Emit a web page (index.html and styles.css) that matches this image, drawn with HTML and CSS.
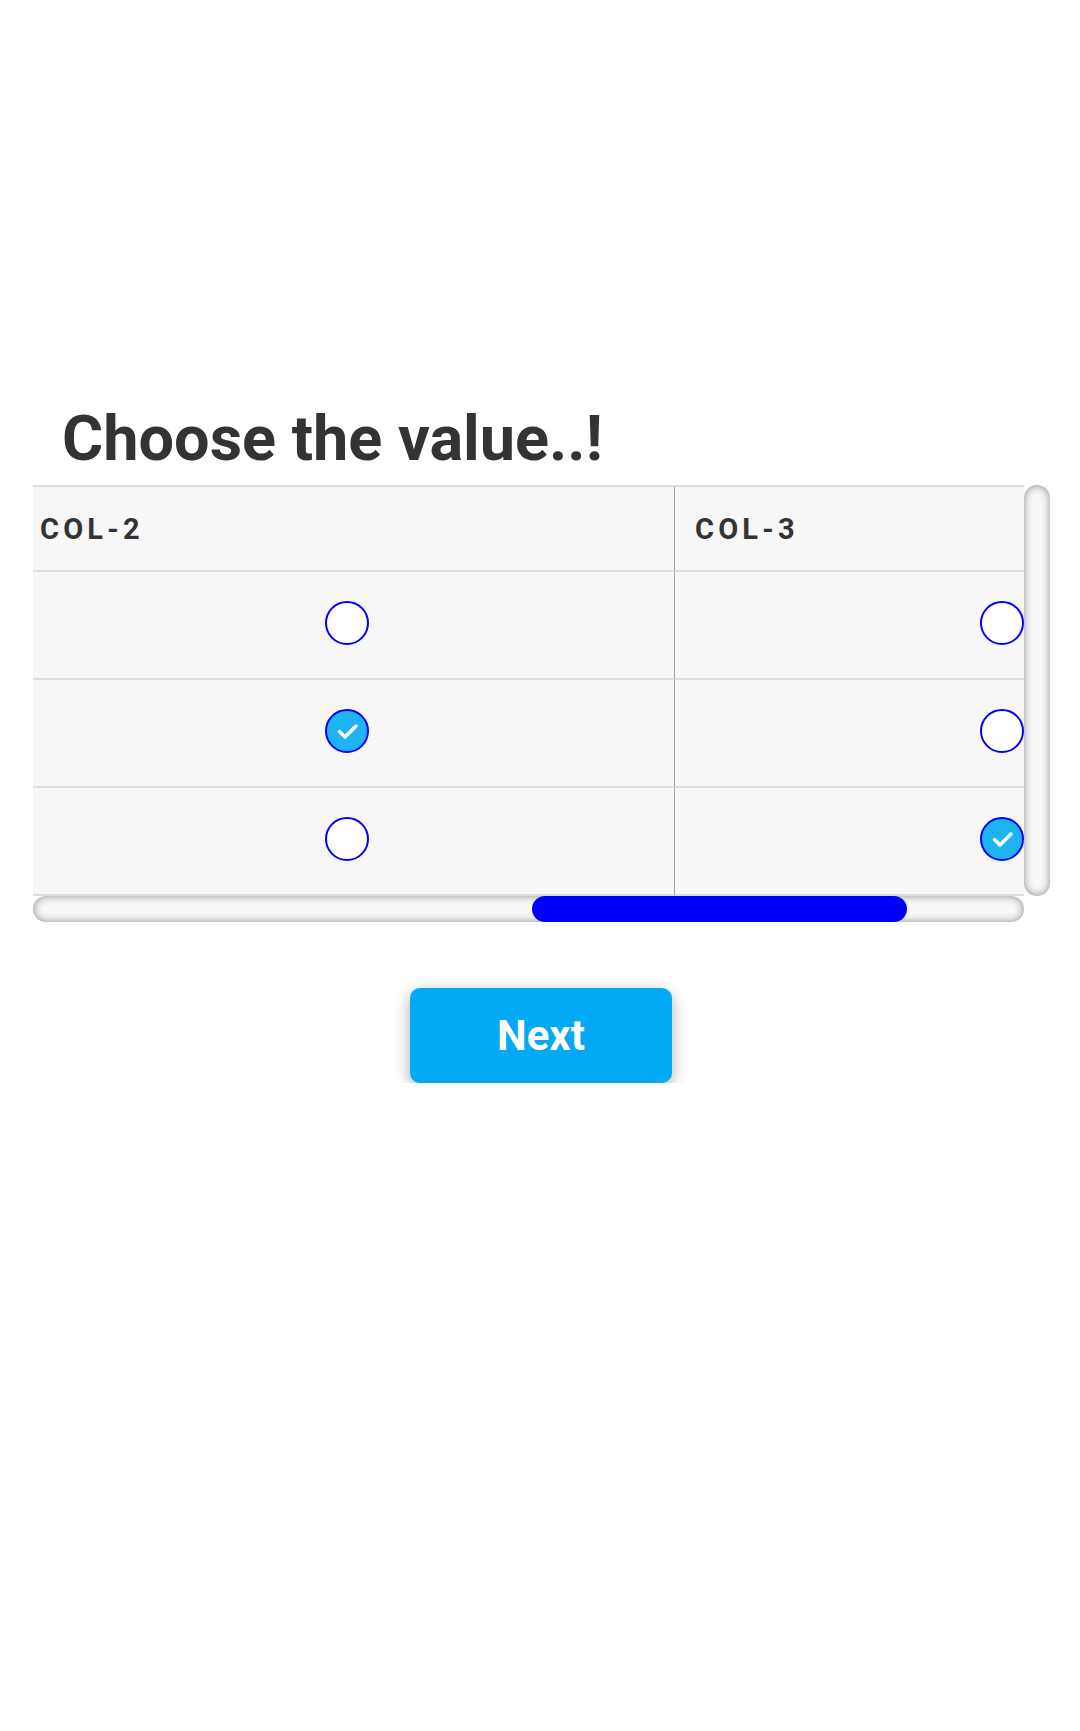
FILE: index.html
```html
<!DOCTYPE html>
<html lang="en">
<head>
<meta charset="utf-8">
<title>Choose the value</title>
<link rel="stylesheet" href="styles.css">
</head>
<body>
<main class="page">
  <h1 class="title">Choose the value..!</h1>
  <div class="matrix">
    <div class="viewport">
      <div class="grid">
        <div class="cell head"></div>
        <div class="cell head"></div>
        <div class="cell head">COL-2</div>
        <div class="cell head">COL-3</div>

        <div class="cell body"><span class="radio"></span></div>
        <div class="cell body"><span class="radio"></span></div>
        <div class="cell body"><span class="radio"></span></div>
        <div class="cell body"><span class="radio"></span></div>

        <div class="cell body"><span class="radio"></span></div>
        <div class="cell body"><span class="radio"></span></div>
        <div class="cell body"><span class="radio checked"><svg viewBox="0 0 44 44" width="44" height="44"><path d="M14.5 22.5 L20 28 L31 17" /></svg></span></div>
        <div class="cell body"><span class="radio"></span></div>

        <div class="cell body"><span class="radio"></span></div>
        <div class="cell body"><span class="radio"></span></div>
        <div class="cell body"><span class="radio"></span></div>
        <div class="cell body"><span class="radio checked"><svg viewBox="0 0 44 44" width="44" height="44"><path d="M14.5 22.5 L20 28 L31 17" /></svg></span></div>
      </div>
    </div>
    <div class="vbar"></div>
    <div class="hbar"><div class="hthumb"></div></div>
    <div class="corner"></div>
  </div>
  <div class="actions">
    <button class="next" type="button">Next</button>
  </div>
</main>
</body>
</html>
```

FILE: styles.css
```css
html, body {
  margin: 0;
  padding: 0;
  background: #ffffff;
}

body {
  font-family: Roboto, "Noto Sans", "Liberation Sans", sans-serif;
  color: #333333;
}

.page {
  padding-top: 407px;
}

.title {
  margin: 0 0 14px 0;
  padding-left: 62px;
  font-size: 63px;
  line-height: 64px;
  font-weight: 700;
  color: #333333;
}

.matrix {
  margin-left: 33px;
  width: 1017px;
  display: grid;
  grid-template-columns: 991px 26px;
  grid-template-rows: 411px 26px;
}

.viewport {
  overflow: hidden;
}

.vbar,
.hbar {
  box-sizing: border-box;
  border-radius: 13px;
  background: #f8f8f8;
  box-shadow: inset 0 0 8px #8c8c8c;
}

.hbar {
  display: flex;
}

.hthumb {
  margin-left: 499px;
  width: 375px;
  height: 26px;
  border-radius: 13px;
  background: #0000ff;
}

.grid {
  display: grid;
  grid-template-columns: repeat(4, 655px);
  width: 2620px;
  margin-left: -1323px;
  border-top: 2px solid #dddddd;
  background: #f7f7f7;
}

.cell {
  box-sizing: border-box;
  border-bottom: 2px solid #dddddd;
  border-right: 1px solid #9e9e9e;
  display: flex;
  align-items: center;
}

.head {
  height: 85px;
  padding-left: 20px;
  font-size: 29px;
  font-weight: 700;
  letter-spacing: 4.2px;
  color: #333333;
}

.body {
  height: 108px;
  justify-content: center;
  padding-bottom: 4px;
}

.radio {
  box-sizing: border-box;
  width: 44px;
  height: 44px;
  border: 2px solid #0000ff;
  border-radius: 50%;
  background: #ffffff;
  display: flex;
  align-items: center;
  justify-content: center;
}

.radio svg {
  flex: none;
  width: 44px;
  height: 44px;
}

.radio.checked {
  background: #1eb3f2;
}

.radio.checked path {
  fill: none;
  stroke: #ffffff;
  stroke-width: 3.5;
  stroke-linecap: round;
  stroke-linejoin: round;
}

.actions {
  display: flex;
  justify-content: center;
  padding-top: 66px;
  padding-left: 2px;
}

.next {
  width: 262px;
  height: 95px;
  border: none;
  border-radius: 10px;
  background: #03a9f4;
  color: #ffffff;
  font-family: Roboto, "Noto Sans", "Liberation Sans", sans-serif;
  font-size: 42px;
  font-weight: 700;
  box-shadow: 0 5px 16px rgba(0, 0, 0, 0.32);
  cursor: pointer;
}
```
